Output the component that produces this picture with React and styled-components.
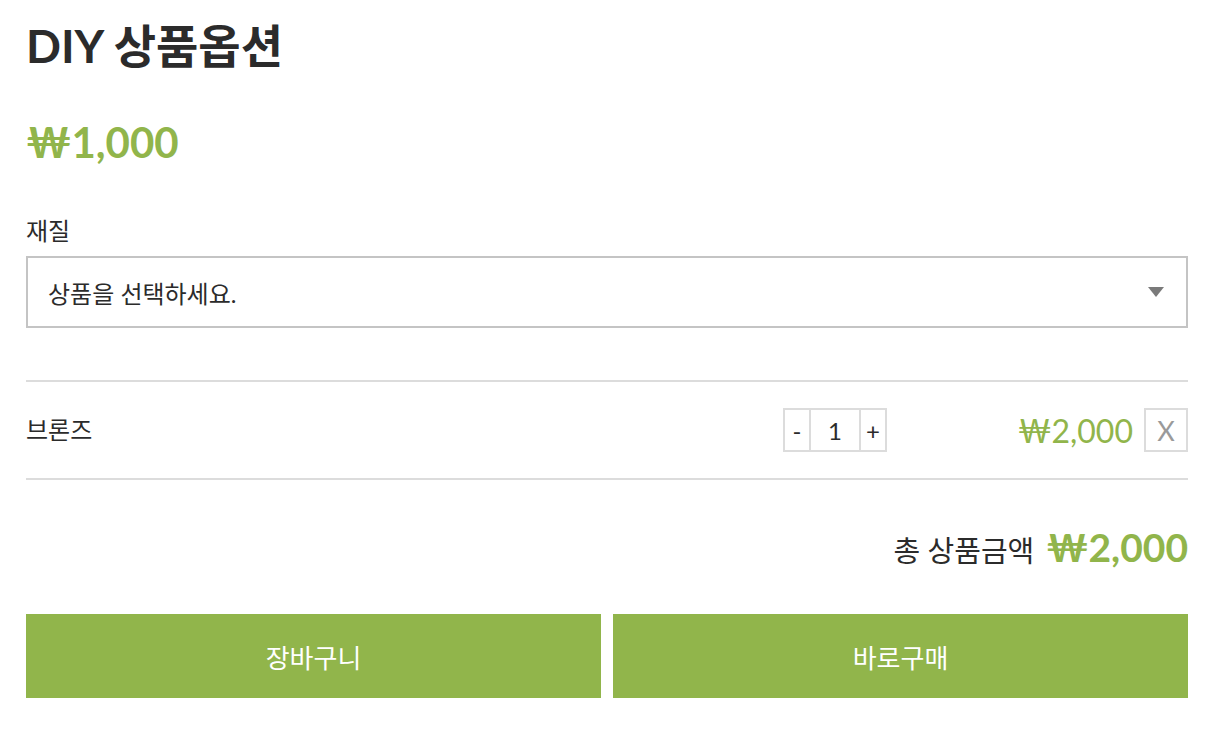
import styled, { createGlobalStyle } from "styled-components";

const GREEN = "#91b54b";

const GlobalStyle = createGlobalStyle`
  body {
    margin: 0;
    background: #fff;
    font-family: Lato, "Noto Sans CJK KR", sans-serif;
    color: #2b2b2b;
  }
`;

const Wrapper = styled.div`
  padding: 14px 24px 36px 26px;
`;

const Title = styled.h1`
  margin: 0;
  font-size: 46px;
  font-weight: 700;
  line-height: 64px;
`;

const Price = styled.div`
  margin-top: 36px;
  font-size: 42px;
  font-weight: 700;
  color: ${GREEN};
  line-height: 56px;
`;

const Label = styled.div`
  margin-top: 46px;
  font-size: 24px;
  line-height: 30px;
`;

const Select = styled.div`
  margin-top: 10px;
  height: 68px;
  border: 2px solid #c4c4c4;
  display: flex;
  align-items: center;
  justify-content: space-between;
  padding: 0 22px 0 20px;
  font-size: 24px;
  cursor: pointer;
`;

const Arrow = styled.span`
  width: 0;
  height: 0;
  border-left: 8px solid transparent;
  border-right: 8px solid transparent;
  border-top: 10px solid #7a7a7a;
`;

const ItemRow = styled.div`
  margin-top: 52px;
  border-top: 2px solid #dcdcdc;
  border-bottom: 2px solid #dcdcdc;
  height: 96px;
  display: flex;
  align-items: center;
`;

const ItemName = styled.div`
  flex: 1;
  font-size: 24px;
  margin-top: -4px;
`;

const Qty = styled.div`
  display: flex;
  height: 44px;
  border: 2px solid #dcdcdc;
  box-sizing: border-box;
`;

const QtyBtn = styled.div`
  width: ${(p) => p.w}px;
  display: flex;
  align-items: center;
  justify-content: center;
  font-size: 24px;
  color: #2b2b2b;
  & + & {
    border-left: 2px solid #dcdcdc;
  }
`;

const ItemPrice = styled.div`
  width: 246px;
  text-align: right;
  font-size: 32px;
  color: ${GREEN};
  margin-right: 11px;
`;

const Remove = styled.div`
  width: 44px;
  height: 44px;
  box-sizing: border-box;
  border: 2px solid #dcdcdc;
  display: flex;
  align-items: center;
  justify-content: center;
  font-size: 27px;
  color: #9a9a9a;
`;

const Total = styled.div`
  margin-top: 44px;
  display: flex;
  justify-content: flex-end;
  align-items: baseline;
  gap: 12px;
`;

const TotalLabel = styled.span`
  font-size: 29px;
`;

const TotalPrice = styled.span`
  font-size: 39px;
  font-weight: 700;
  color: ${GREEN};
`;

const Buttons = styled.div`
  margin-top: 44px;
  display: grid;
  grid-template-columns: 1fr 1fr;
  gap: 12px;
`;

const Button = styled.button`
  height: 84px;
  border: none;
  background: ${GREEN};
  color: #fff;
  font-family: inherit;
  font-size: 26px;
  cursor: pointer;
`;

export default function App() {
  return (
    <>
      <GlobalStyle />
      <Wrapper>
        <Title>DIY 상품옵션</Title>
        <Price>₩1,000</Price>
        <Label>재질</Label>
        <Select>
          <span>상품을 선택하세요.</span>
          <Arrow />
        </Select>
        <ItemRow>
          <ItemName>브론즈</ItemName>
          <Qty>
            <QtyBtn w={24}>-</QtyBtn>
            <QtyBtn w={48}>1</QtyBtn>
            <QtyBtn w={24}>+</QtyBtn>
          </Qty>
          <ItemPrice>₩2,000</ItemPrice>
          <Remove>X</Remove>
        </ItemRow>
        <Total>
          <TotalLabel>총 상품금액</TotalLabel>
          <TotalPrice>₩2,000</TotalPrice>
        </Total>
        <Buttons>
          <Button>장바구니</Button>
          <Button>바로구매</Button>
        </Buttons>
      </Wrapper>
    </>
  );
}
